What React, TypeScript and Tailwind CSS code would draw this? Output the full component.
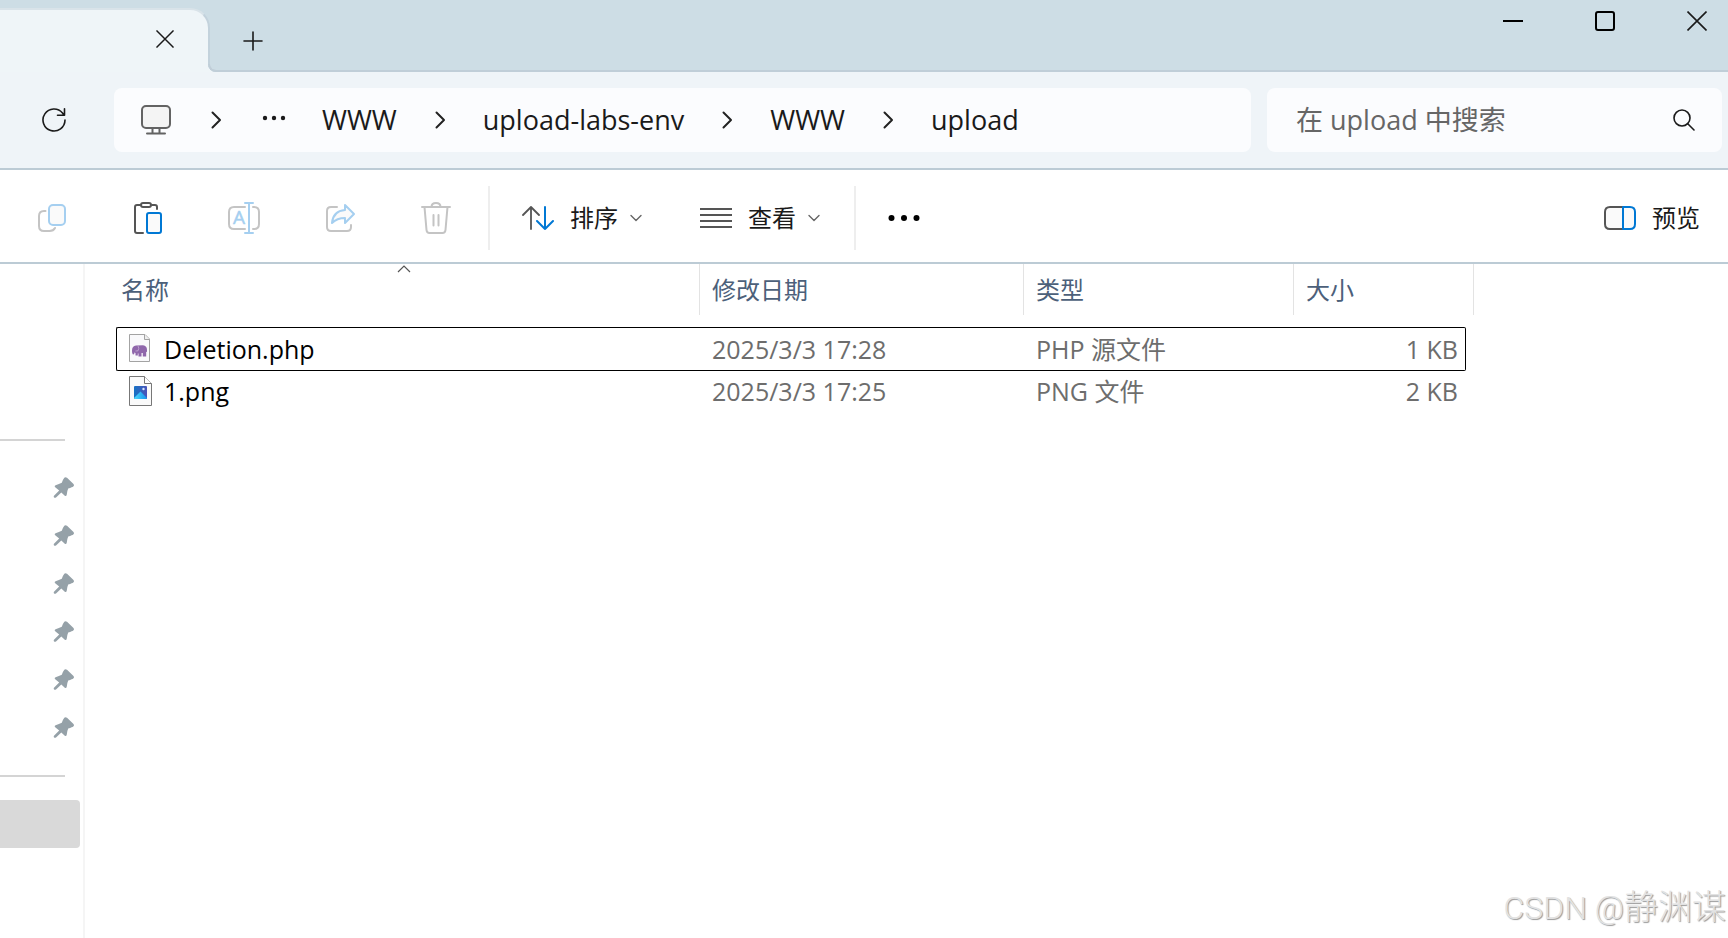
import type { ReactNode } from 'react'

type IconProps = {
  size: number
  className?: string
  children: ReactNode
}

const Icon = ({ size, className = 'text-[#555]', children }: IconProps) => (
  <svg
    width={size}
    height={size}
    viewBox={`0 0 ${size} ${size}`}
    fill="none"
    stroke="currentColor"
    strokeWidth="2"
    strokeLinecap="round"
    strokeLinejoin="round"
    aria-hidden="true"
    className={`block shrink-0 ${className}`}
  >
    {children}
  </svg>
)

const CloseIcon = ({ size }: { size: number }) => (
  <svg
    width={size}
    height={size}
    viewBox="0 0 20 20"
    aria-hidden="true"
    className="block text-[#1a1a1a]"
  >
    <path d="M.5 .5L19.500 19.500M19.500 .5L.5 19.500" stroke="currentColor" strokeWidth="1.600" />
  </svg>
)

const CrumbArrow = () => (
  <Icon size={18} className="text-[#222]">
    <path d="M5.500 1.500L13 9L5.500 16.500" />
  </Icon>
)

const DownArrow = () => (
  <Icon size={12} className="text-[#666]">
    <path d="M1 3.500L6 8.500L11 3.500" strokeWidth="1.400" />
  </Icon>
)

const PinIcon = () => (
  <svg width="22" height="22" viewBox="0 0 22 22" aria-hidden="true">
    <path
      d="M11.300 .8Q12.500 -.3 14 .8L20.500 7Q21.600 8.500 20.200 9.600Q19.500 10.300 15.200 11.600Q14.300 13.500 13.800 17.500Q13.300 19.800 11.800 18.800L8.300 15.600L3 20.600Q1.600 21.200 .9 20.200Q.4 19.200 1.200 18.400L6.200 13.600L2.200 10.300Q1 8.800 2.600 8.200Q6 7 8.800 5.800Q10 2.400 11.300 .8Z"
      fill="#95a1a8"
    />
  </svg>
)

const PhpIcon = () => (
  <svg width="24" height="30" viewBox="0 0 24 30" aria-hidden="true">
    <path d="M.5 .5H16L20.500 5V27.500H.5Z" fill="#f9f9fb" stroke="#a3a3a3" />
    <path d="M15.500 .5V5.500H20.500" fill="#eee" stroke="#a3a3a3" />
    <path
      d="M3 16.500Q3 12 7 11.500L14 11.300Q18 11.800 18 16V18L17.200 17.800V22.500H13.800V19H12.500V22.500H9.500V19.500H8.800V21.500H6.500V19L5.300 18.500Q5.800 20.500 4.300 20.500Q3 20.200 3 16.500Z"
      fill="#8f66ab"
    />
    <path
      d="M9 11.800Q10.500 14.500 9 16.800L6.500 17"
      fill="none"
      stroke="#c5acd4"
      strokeWidth=".8"
    />
  </svg>
)

const PngIcon = () => (
  <svg width="24" height="30" viewBox="0 0 24 30" aria-hidden="true">
    <defs>
      <linearGradient id="sky" x1="0" y1="0" x2="1" y2="0">
        <stop offset="0" stopColor="#1672c4" />
        <stop offset="1" stopColor="#4a53b8" />
      </linearGradient>
      <linearGradient id="hill" x1="0" y1="0" x2="1" y2="0">
        <stop offset="0" stopColor="#4ed8fb" />
        <stop offset="1" stopColor="#1494ec" />
      </linearGradient>
    </defs>
    <path d="M.5 .5H15.500L22.500 7.500V29.500H.5Z" fill="#fafafa" stroke="#777" />
    <path d="M15.500 .5V7.500H22.500" fill="#fff" stroke="#777" />
    <rect x="5" y="10" width="13" height="13" rx="1" fill="url(#sky)" />
    <path d="M5 22L11.500 15.500L18 22Q18 23 17 23H6Q5 23 5 22Z" fill="url(#hill)" />
    <circle cx="14.500" cy="13" r="1.200" fill="#d8e6ff" />
  </svg>
)

const toolbarIcons = [
  {
    label: '复制',
    disabled: true,
    icon: (
      <Icon size={32} className="text-[#c4c4c4]">
        <path d="M9.500 9H8Q3 9 3 14V24Q3 29 8 29H13.500Q17.500 29 19 26" />
        <rect x="13" y="3" width="16" height="20" rx="4" stroke="#a5cff0" fill="#fafafa" />
      </Icon>
    ),
  },
  {
    label: '粘贴',
    disabled: false,
    icon: (
      <Icon size={32}>
        <path d="M8 3H5Q3 3 3 5V29Q3 31 5 31H11M20 3H23Q25 3 25 5V7" />
        <rect x="9" y="1" width="10" height="4" rx="2" />
        <rect x="15" y="11" width="14" height="20" rx="2" stroke="#0078d4" fill="#fafafa" />
      </Icon>
    ),
  },
  {
    label: '重命名',
    disabled: true,
    icon: (
      <Icon size={32} className="text-[#c4c4c4]">
        <path d="M17 5H6Q1 5 1 10V22Q1 27 6 27H17M25 5H26Q31 5 31 10V22Q31 27 26 27H25" />
        <path d="M17 1H25M21 1V31M17 31H25" stroke="#a5cff0" />
        <text
          x="11"
          y="22"
          textAnchor="middle"
          fontSize="19"
          fill="#a5cff0"
          stroke="#a5cff0"
          strokeWidth=".5"
          className="font-['Open_Sans',sans-serif]"
        >
          A
        </text>
      </Icon>
    ),
  },
  {
    label: '共享',
    disabled: true,
    icon: (
      <Icon size={32} className="text-[#c4c4c4]">
        <path d="M13 5H7Q3 5 3 9V25Q3 29 7 29H23Q27 29 27 25V23" />
        <path
          d="M21 3L30 12L21 21V16Q13 16 8 21Q9 9 21 8Z"
          stroke="#a5cff0"
          fill="#fafafa"
        />
      </Icon>
    ),
  },
  {
    label: '删除',
    disabled: true,
    icon: (
      <Icon size={32} className="text-[#c4c4c4]">
        <path d="M2 5H30M11.500 5Q11.500 1 16 1Q20.500 1 20.500 5M4.500 5L6.500 28Q6.800 31 9.500 31H22.500Q25.200 31 25.500 28L27.500 5M13.500 13V23.500M18.500 13V23.500" />
      </Icon>
    ),
  },
]

const crumbs = ['WWW', 'upload-labs-env', 'WWW', 'upload']

const files = [
  { name: 'Deletion.php', date: '2025/3/3 17:28', type: 'PHP 源文件', size: '1 KB', icon: <PhpIcon />, focused: true },
  { name: '1.png', date: '2025/3/3 17:25', type: 'PNG 文件', size: '2 KB', icon: <PngIcon />, focused: false },
]

const pinned = [1, 2, 3, 4, 5, 6]

const TitleBar = () => (
  <header className="flex h-[72px] bg-[linear-gradient(to_bottom,#cddde5_50%,#eff5f8_50%)]">
    <div className="z-10 mt-2 flex h-14 w-[210px] shrink-0 justify-end rounded-tr-[20px] border-t-2 border-r-2 border-[#c3d2dc] border-t-[#d9e3e9] bg-[#eff5f8] pt-5 pr-[34px]">
      <button type="button" aria-label="关闭标签页" className="h-[18px]">
        <CloseIcon size={18} />
      </button>
    </div>
    <div className="relative -ml-0.5 flex flex-1 items-start rounded-bl-lg border-b-2 border-[#c0ced8] bg-[#cddde5] before:absolute before:-bottom-0.5 before:left-0 before:h-2 before:w-4 before:rounded-bl-lg before:border-b-2 before:border-l-2 before:border-[#c0ced8]">
      <button type="button" aria-label="新建标签页" className="mt-[31px] ml-[35px]">
        <Icon size={20} className="text-[#1a1a1a]">
          <path d="M10 1V19M1 10H19" strokeWidth="1.600" />
        </Icon>
      </button>
      <div className="mt-[11px] mr-[21px] ml-auto flex gap-[72px]">
        <button type="button" aria-label="最小化">
          <Icon size={20} className="text-black">
            <path d="M0 10H20" strokeLinecap="butt" />
          </Icon>
        </button>
        <button type="button" aria-label="最大化">
          <Icon size={20} className="text-black">
            <rect x="1" y="1" width="18" height="18" rx="2" />
          </Icon>
        </button>
        <button type="button" aria-label="关闭">
          <CloseIcon size={20} />
        </button>
      </div>
    </div>
  </header>
)

const AddressBar = () => (
  <div className="flex h-[98px] items-center border-b-2 border-[#bccbd5] bg-[#eff4f8] pr-1.5">
    <div className="flex w-[114px] shrink-0 pl-[42px]">
      <button type="button" aria-label="刷新">
        <Icon size={24} className="text-[#1a1a1a]">
          <path d="M23 12A11 11 0 1 1 20.500 5L22 7M22.500 .8V7.200H15.500" strokeWidth="1.600" />
        </Icon>
      </button>
    </div>
    <nav
      aria-label="路径"
      className="flex h-16 min-w-0 flex-1 items-center rounded-lg bg-[#fbfcfe] pl-[27px] text-[27px] text-[#1a1a1a]"
    >
      <a href="#pc" aria-label="此电脑">
        <Icon size={30} className="text-[#636363]">
          <rect x="1" y="1" width="28" height="22" rx="4" fill="#f4f4f4" />
          <path d="M11.500 23V28M18.500 23V28M6 28.500H24" />
        </Icon>
      </a>
      <span className="mr-[37px] ml-9">
        <CrumbArrow />
      </span>
      <button type="button" aria-label="更多路径" className="mb-1">
        <Icon size={24} className="text-[#1a1a1a]">
          <g fill="currentColor" stroke="none">
            <circle cx="3" cy="12" r="2.200" />
            <circle cx="12" cy="12" r="2.200" />
            <circle cx="21" cy="12" r="2.200" />
          </g>
        </Icon>
      </button>
      <ol className="ml-9 flex items-center gap-[34px]">
        {crumbs.map((crumb, i) => (
          <li key={i} className="flex items-center gap-[34px]">
            {i > 0 && <CrumbArrow />}
            <a href={`#${crumb}`}>{crumb}</a>
          </li>
        ))}
      </ol>
    </nav>
    <label className="ml-4 flex h-16 w-[455px] shrink-0 items-center rounded-lg bg-[#fbfcfe] pr-[26px] pl-[29px] text-[27px]">
      <input
        type="search"
        aria-label="搜索"
        placeholder="在 upload 中搜索"
        className="min-w-0 flex-1 bg-transparent outline-none placeholder:text-[#666]"
      />
      <Icon size={24} className="text-[#1a1a1a]">
        <circle cx="10" cy="10" r="8" strokeWidth="1.600" />
        <path d="M15.500 15.500L22 22" strokeWidth="1.600" />
      </Icon>
    </label>
  </div>
)

const Toolbar = () => (
  <div
    role="toolbar"
    className="flex h-[94px] items-center border-b-2 border-[#bccbd5] bg-white pt-1 pl-1 text-[24px] text-[#1a1a1a]"
  >
    {toolbarIcons.map(({ label, disabled, icon }) => (
      <button
        key={label}
        type="button"
        aria-label={label}
        disabled={disabled}
        className="flex w-24 justify-center"
      >
        {icon}
      </button>
    ))}
    <div className="ml-1 h-16 w-0.5 bg-[#eee]" />
    <button type="button" className="ml-8 flex items-center">
      <Icon size={32}>
        <path d="M9 27V5M1 13L9 5L17 13" strokeWidth="1.800" />
        <path d="M23 5V27M15 19L23 27L31 19" stroke="#0078d4" />
      </Icon>
      <span className="mr-3 ml-4">排序</span>
      <DownArrow />
    </button>
    <button type="button" className="ml-[58px] flex items-center">
      <Icon size={32}>
        <path d="M0 7H32M0 13H32M0 19H32M0 25H32" strokeLinecap="butt" />
      </Icon>
      <span className="mr-3 ml-4">查看</span>
      <DownArrow />
    </button>
    <div className="ml-[34px] h-16 w-0.5 bg-[#eee]" />
    <button type="button" aria-label="更多" className="ml-8">
      <Icon size={32} className="text-black">
        <g fill="currentColor" stroke="none">
          <circle cx="3.500" cy="16" r="3" />
          <circle cx="16" cy="16" r="3" />
          <circle cx="28.500" cy="16" r="3" />
        </g>
      </Icon>
    </button>
    <button type="button" className="mr-7 ml-auto flex items-center gap-4">
      <Icon size={32}>
        <path d="M19 5H6Q1 5 1 10V22Q1 27 6 27H19" fill="#fafafa" />
        <path d="M19 5H26Q31 5 31 10V22Q31 27 26 27H19Z" stroke="#0078d4" fill="#fafafa" />
      </Icon>
      预览
    </button>
  </div>
)

const Sidebar = () => (
  <aside className="w-[85px] shrink-0 border-r-2 border-[#f5f5f5] pt-[175px]">
    <hr className="mr-[18px] border-t-2 border-[#d4d4d4]" />
    <ul className="my-[23px]">
      {pinned.map((id) => (
        <li key={id} className="flex h-12 items-center justify-end pr-2">
          <PinIcon />
        </li>
      ))}
    </ul>
    <hr className="mr-[18px] border-t-2 border-[#d4d4d4]" />
    <div className="mt-[23px] mr-[3px] h-12 rounded-r-sm bg-[#d9d9d9]" />
  </aside>
)

const headCell = 'flex h-[51px] items-center border-r border-[#e3e3e3]'

const FileTable = () => (
  <main className="min-w-0 flex-1 pl-[31px]">
    <table className="w-[1358px] table-fixed border-separate border-spacing-0 text-left text-[25px] leading-9 text-[#6d6d6d]">
      <colgroup>
        <col className="w-[584px]" />
        <col className="w-[324px]" />
        <col className="w-[270px]" />
        <col className="w-[172px]" />
        <col className="w-2" />
      </colgroup>
      <thead className="text-[24px] text-[#4c607a]">
        <tr>
          <th className="relative p-0 pb-3 font-normal" aria-sort="ascending">
            <div className={`${headCell} pl-[5px]`}>名称</div>
            <svg
              width="14"
              height="9"
              viewBox="0 0 14 9"
              aria-hidden="true"
              className="absolute top-0 left-[281px]"
            >
              <path d="M1 8L7 2L13 8" fill="none" stroke="#555" strokeWidth="1.200" />
            </svg>
          </th>
          <th className="p-0 pb-3 font-normal">
            <div className={`${headCell} pl-3`}>修改日期</div>
          </th>
          <th className="p-0 pb-3 font-normal">
            <div className={`${headCell} pl-3`}>类型</div>
          </th>
          <th className="p-0 pb-3 font-normal" colSpan={2}>
            <div className={`${headCell} pl-3`}>大小</div>
          </th>
        </tr>
      </thead>
      <tbody>
        {files.map((file) => {
          const line = file.focused ? 'h-11 border-y border-black' : 'h-10'
          return (
            <tr key={file.name}>
              <td
                className={`p-0 ${line} ${file.focused ? 'rounded-l-[2px] border-l pl-3' : 'pl-[13px]'}`}
              >
                <span className="flex items-center gap-[11px] text-black">
                  {file.icon}
                  {file.name}
                </span>
              </td>
              <td className={`p-0 pl-3 ${line}`}>{file.date}</td>
              <td className={`p-0 pl-3 ${line}`}>{file.type}</td>
              <td
                className={`p-0 text-right ${line} ${file.focused ? 'rounded-r-[2px] border-r pr-[7px]' : 'pr-2'}`}
              >
                {file.size}
              </td>
              <td className="p-0" />
            </tr>
          )
        })}
      </tbody>
    </table>
  </main>
)

export default function App() {
  return (
    <div className="relative flex min-h-screen flex-col overflow-hidden bg-white font-['Open_Sans','Noto_Sans_CJK_SC',sans-serif]">
      <TitleBar />
      <AddressBar />
      <Toolbar />
      <div className="flex flex-1">
        <Sidebar />
        <FileTable />
      </div>
      <p className="absolute right-0.5 bottom-2 font-['Roboto','Noto_Sans_CJK_SC',sans-serif] text-[32px] leading-11 font-light text-[#e2e2e2] [text-shadow:1px_1px_1px_#999]">
        CSDN @<span className="text-[34px]">静渊谋</span>
      </p>
    </div>
  )
}
